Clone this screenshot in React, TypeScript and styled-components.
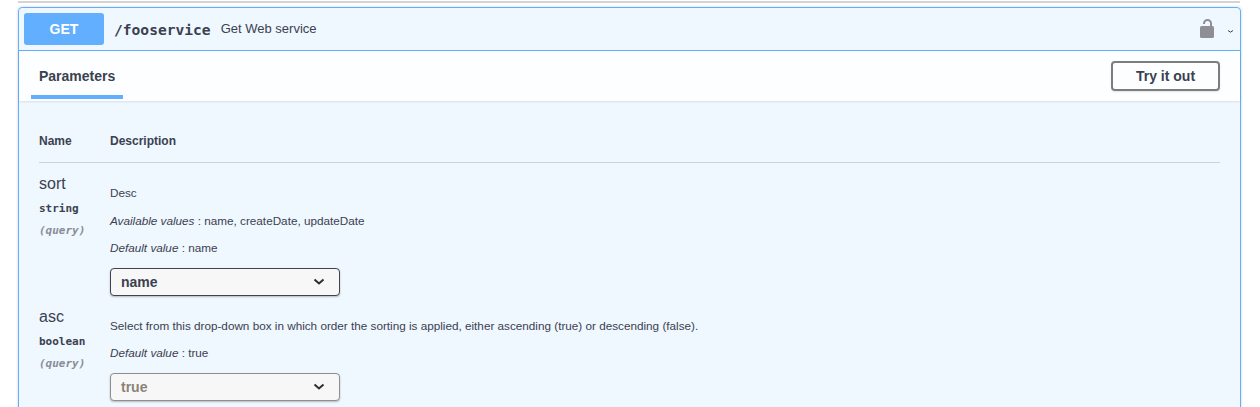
import React from 'react';
import styled, { createGlobalStyle } from 'styled-components';

const GlobalStyle = createGlobalStyle`
    html, body {
        margin: 0;
        background: #fff;
        overflow: hidden;
    }
    body {
        font-family: "Liberation Sans", Arial, sans-serif;
        color: #3b4151;
    }
`;

const Page = styled.div`
    height: 407px;
    overflow: hidden;
    padding-top: 1px;
    box-sizing: border-box;
`;

const TopRule = styled.div`
    height: 2px;
    margin: 0 20px 4px 18px;
    background: #d4d4d4;
`;

const Block = styled.section`
    margin: 0 19px 0 18px;
    border: 1px solid #61affe;
    border-radius: 4px;
    background: rgba(97, 175, 254, 0.1);
    box-shadow: 0 0 3px rgba(0, 0, 0, 0.19);
`;

const Summary = styled.div`
    display: flex;
    align-items: center;
    height: 42px;
    padding: 0 5px;
    border-bottom: 1px solid #61affe;
`;

const Method = styled.span`
    width: 80px;
    height: 32px;
    line-height: 32px;
    border-radius: 3px;
    background: #61affe;
    color: #fff;
    font-size: 14px;
    font-weight: 700;
    text-align: center;
    flex: none;
`;

const Path = styled.span`
    margin-left: 10px;
    font-family: "DejaVu Sans Mono", monospace;
    font-size: 14.6px;
    font-weight: 700;
    color: #3b4151;
`;

const SummaryText = styled.span`
    margin-left: 10px;
    margin-top: -1px;
    font-size: 13px;
    flex: 1;
`;

const LockIcon = styled.svg`
    width: 20px;
    height: 20px;
    margin-top: -1px;
    flex: none;
`;

const CaretIcon = styled.svg`
    width: 5px;
    height: 3px;
    margin: 4px 2px 0 11px;
    flex: none;
`;

const TabHeader = styled.div`
    display: flex;
    align-items: center;
    justify-content: space-between;
    height: 50px;
    padding: 0 20px 0 12px;
    background: rgba(255, 255, 255, 0.8);
    box-shadow: 0 1px 2px rgba(0, 0, 0, 0.1);
`;

const Tab = styled.div`
    align-self: flex-start;
    display: flex;
    align-items: center;
    width: 92px;
    height: 48px;
    box-sizing: border-box;
    padding: 6px 0 0 8px;
    border-bottom: 4px solid #61affe;
    font-size: 14px;
    font-weight: 700;
`;

const TryButton = styled.button`
    width: 109px;
    height: 30px;
    padding: 0;
    border: 2px solid #7d7d7d;
    border-radius: 4px;
    background: transparent;
    box-shadow: 0 1px 2px rgba(0, 0, 0, 0.1);
    color: #3b4151;
    font: 700 14px "Liberation Sans", Arial, sans-serif;
`;

const Parameters = styled.div`
    padding: 20px 20px 40px;
`;

const Heads = styled.div`
    display: grid;
    grid-template-columns: 71px 1fr;
    align-items: center;
    height: 42px;
    box-sizing: border-box;
    padding-bottom: 2px;
    border-bottom: 1px solid rgba(59, 65, 81, 0.2);
    font-size: 12px;
    font-weight: 700;
`;

const Row = styled.div`
    display: grid;
    grid-template-columns: 71px 1fr;
    padding-top: 11px;
`;

const NameCell = styled.div`
    display: flex;
    flex-direction: column;
`;

const ParamName = styled.div`
    font-size: 16px;
    line-height: 20px;
`;

const ParamType = styled.div`
    margin-top: 8px;
    font-family: "DejaVu Sans Mono", monospace;
    font-size: 11px;
    font-weight: 700;
    line-height: 14px;
`;

const ParamIn = styled.div`
    margin-top: 8px;
    font-family: "DejaVu Sans Mono", monospace;
    font-size: 11px;
    font-weight: 700;
    font-style: italic;
    line-height: 14px;
    color: #8a8d95;
`;

const DescCell = styled.div`
    display: flex;
    flex-direction: column;
    align-items: flex-start;
    padding-top: 12px;
`;

const Line = styled.p`
    margin: 0 0 13.5px;
    font-size: 11.72px;
    line-height: 14px;
`;

const Select = styled.div<{ $muted?: boolean }>`
    display: flex;
    align-items: center;
    justify-content: space-between;
    width: 230px;
    height: 28px;
    margin-top: -1px;
    box-sizing: border-box;
    padding: 0 14px 0 10px;
    border: 1px solid ${(p) => (p.$muted ? '#8f8f8f' : '#41444e')};
    border-radius: 4px;
    background: #f7f7f7;
    box-shadow: 0 1px 2px rgba(0, 0, 0, 0.25);
    color: ${(p) => (p.$muted ? '#8b8378' : '#3b4151')};
    font-size: 14px;
    font-weight: 700;
`;

const Chevron = () => (
    <svg width="12" height="12" viewBox="0 0 12 12" fill="none" stroke="#2b2e36" strokeWidth="2">
        <path d="M1.500 3.500L6 7.500l4.500-4" />
    </svg>
);

const Lock = () => (
    <LockIcon viewBox="0 0 20 20">
        <path d="M7 5V4.500a3.500 3.500 0 0 1 7 0V8" fill="none" stroke="#8d8f94" strokeWidth="2" />
        <rect x="3" y="7" width="14" height="12" rx="1.500" fill="#8d8f94" />
    </LockIcon>
);

const Caret = () => (
    <CaretIcon viewBox="0 0 5 3">
        <path d="M0 .5L2.500 2.200 5 .5" fill="none" stroke="#3b4151" strokeWidth="1" />
    </CaretIcon>
);

const App: React.FC = () => (
    <Page>
        <GlobalStyle />
        <TopRule />
        <Block>
            <Summary>
                <Method>GET</Method>
                <Path>/fooservice</Path>
                <SummaryText>Get Web service</SummaryText>
                <Lock />
                <Caret />
            </Summary>
            <TabHeader>
                <Tab>Parameters</Tab>
                <TryButton>Try it out</TryButton>
            </TabHeader>
            <Parameters>
                <Heads>
                    <span>Name</span>
                    <span>Description</span>
                </Heads>
                <Row>
                    <NameCell>
                        <ParamName>sort</ParamName>
                        <ParamType>string</ParamType>
                        <ParamIn>(query)</ParamIn>
                    </NameCell>
                    <DescCell>
                        <Line>Desc</Line>
                        <Line><i>Available values</i> : name, createDate, updateDate</Line>
                        <Line><i>Default value</i> : name</Line>
                        <Select>name<Chevron /></Select>
                    </DescCell>
                </Row>
                <Row>
                    <NameCell>
                        <ParamName>asc</ParamName>
                        <ParamType>boolean</ParamType>
                        <ParamIn>(query)</ParamIn>
                    </NameCell>
                    <DescCell>
                        <Line>Select from this drop-down box in which order the sorting is applied, either ascending (true) or descending (false).</Line>
                        <Line><i>Default value</i> : true</Line>
                        <Select $muted>true<Chevron /></Select>
                    </DescCell>
                </Row>
            </Parameters>
        </Block>
    </Page>
);

export default App;
